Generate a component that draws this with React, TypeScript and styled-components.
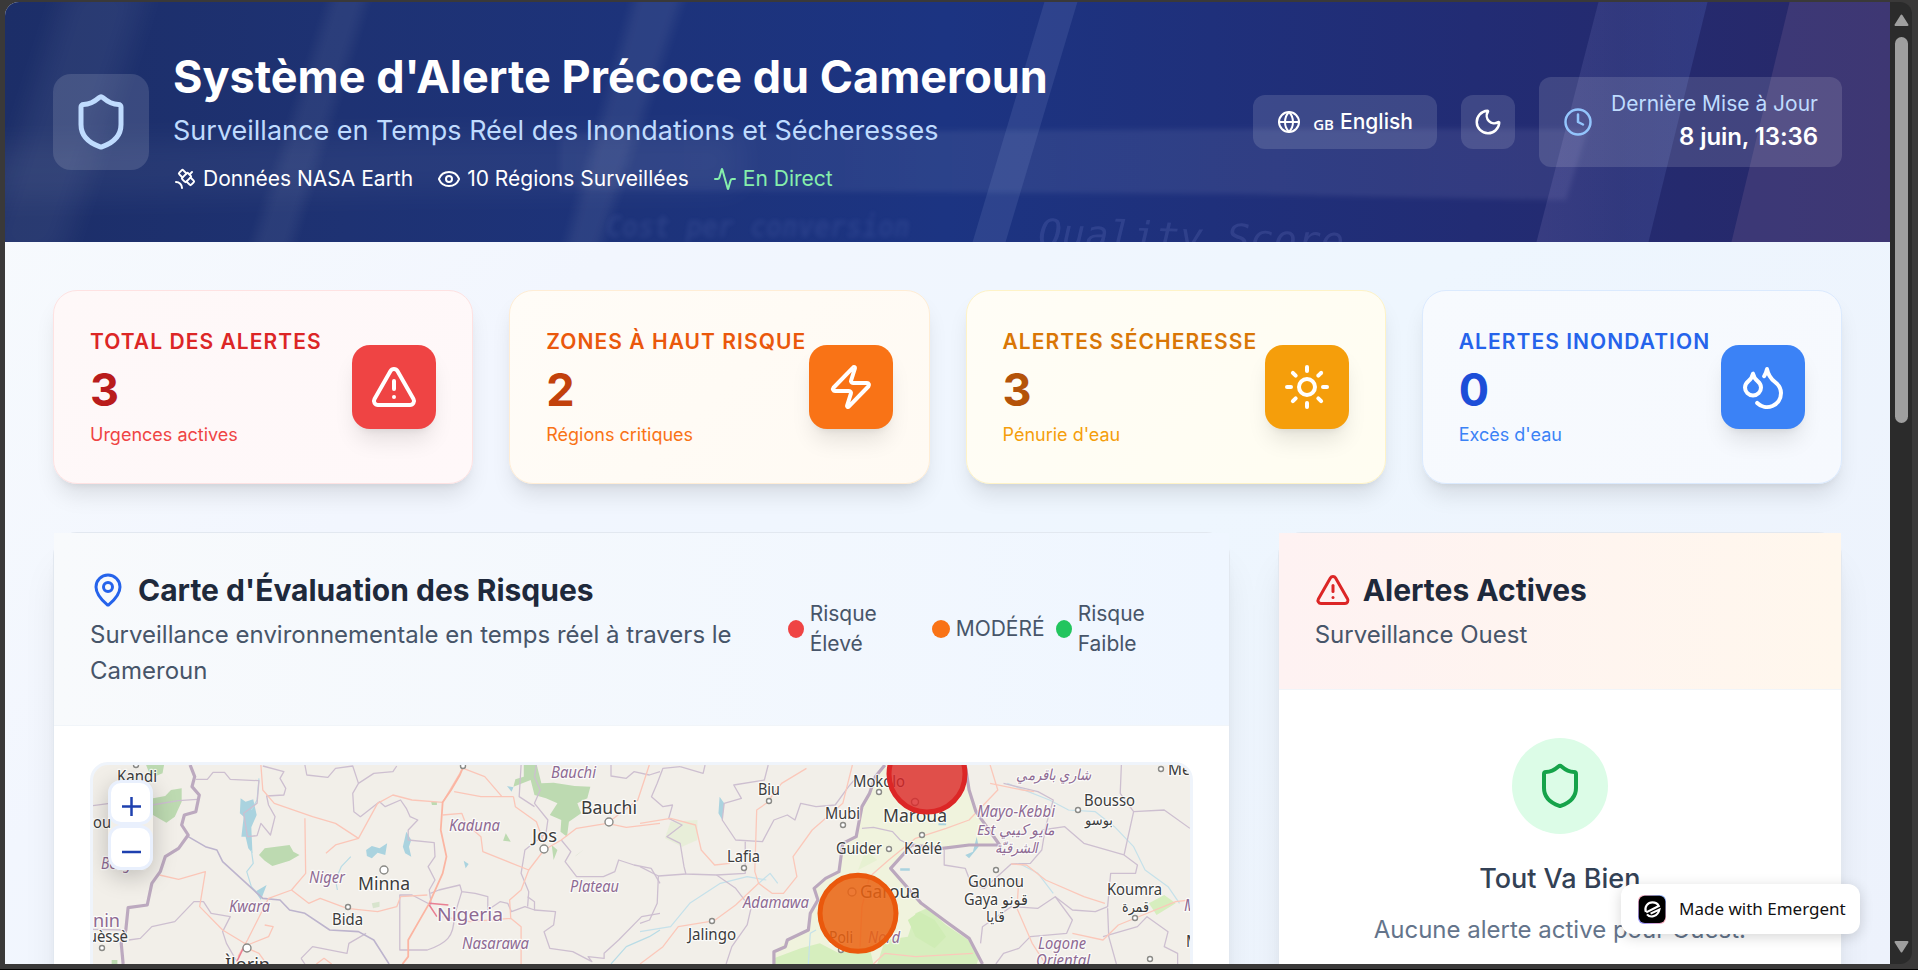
import React from "react";
import styled, { createGlobalStyle } from "styled-components";
import {
  Activity,
  Clock,
  Droplets,
  Eye,
  Globe,
  MapPin,
  Moon,
  Satellite,
  Shield,
  Sun,
  TriangleAlert,
  Zap,
} from "lucide-react";

const GlobalStyle = createGlobalStyle`
  *, *::before, *::after { box-sizing: border-box; }
  html, body { margin: 0; padding: 0; background: #000; overflow: hidden; }
  body { font-family: Inter, "Liberation Sans", sans-serif; }
  h1, h2, h3, p { margin: 0; }
`;

const Frame = styled.div`
  height: 969px;
  padding: 2px 6px 5px 5px;
  background: #3a3939;
`;

const Window = styled.div`
  position: relative;
  display: flex;
  height: 962px;
  border-radius: 14px 12px 12px 0;
  overflow: hidden;
`;

const Page = styled.div`
  width: 1885px;
  height: 962px;
  flex: none;
  overflow: hidden;
  background: linear-gradient(135deg, #f8fbfd 0%, #f2f6fe 30%, #eef6fe 60%, #edf2fc 100%);
`;

const Scrollbar = styled.div`
  display: flex;
  flex: 1;
  flex-direction: column;
  align-items: center;
  padding: 12px 4px 11px 4px;
  background: #2b2b2b;
`;

const Arrow = styled.svg`
  width: 15px;
  height: 12px;
  flex: none;
  fill: #9f9f9f;
  stroke: #9f9f9f;
  stroke-width: 2;
  stroke-linejoin: round;
`;

const Thumb = styled.div`
  width: 13px;
  height: 386px;
  margin: 11px 0 auto;
  border-radius: 7px;
  background: #9f9f9f;
`;

const Header = styled.header`
  position: relative;
  height: 240px;
  padding: 48px;
  overflow: hidden;
  background: linear-gradient(90deg, #1c2e68 0%, #1e3273 18%, #1c3482 50%, #222c74 78%, #282868 100%);
`;

const Backdrop = styled.svg`
  position: absolute;
  inset: 0;
  width: 100%;
  height: 100%;
`;

const HeaderRow = styled.div`
  position: relative;
  display: flex;
  align-items: center;
  justify-content: space-between;
  height: 144px;
`;

const Brand = styled.div`
  display: flex;
  align-items: center;
  gap: 24px;
`;

const glass = "rgba(255, 255, 255, 0.13)";

const BrandIcon = styled.div`
  display: grid;
  place-items: center;
  width: 96px;
  height: 96px;
  border-radius: 18px;
  background: ${glass};
  color: #bfdbfe;
`;

const Title = styled.h1`
  font-size: 45px;
  line-height: 54px;
  font-weight: 700;
  color: #fff;
  white-space: nowrap;
`;

const Subtitle = styled.p`
  margin-top: 6px;
  font-size: 27px;
  line-height: 42px;
  color: #bfdbfe;
`;

const Facts = styled.div`
  display: flex;
  gap: 24px;
  margin-top: 12px;
`;

const Fact = styled.div<{ $color?: string }>`
  display: flex;
  align-items: center;
  gap: 6px;
  font-size: 21px;
  line-height: 30px;
  color: ${(p) => p.$color ?? "#fff"};
`;

const Actions = styled.div`
  display: flex;
  align-items: center;
  gap: 24px;
  color: #fff;
`;

const LanguageButton = styled.button`
  display: flex;
  align-items: center;
  width: 184px;
  height: 54px;
  padding: 0 24px;
  border: 0;
  border-radius: 12px;
  background: ${glass};
  color: #fff;
  font: 500 21px/30px Inter, sans-serif;
  white-space: nowrap;
`;

const Flag = styled.span`
  width: 21px;
  margin: 3px 6px 0 12px;
  font: 600 15px/24px "Open Sans", sans-serif;
`;

const ThemeButton = styled.button`
  display: grid;
  place-items: center;
  width: 54px;
  height: 54px;
  padding: 0;
  border: 0;
  border-radius: 12px;
  background: ${glass};
  color: #fff;
`;

const Updated = styled.div`
  display: flex;
  align-items: center;
  gap: 18px;
  height: 90px;
  padding: 12px 24px;
  border-radius: 12px;
  background: ${glass};
  text-align: right;
`;

const UpdatedLabel = styled.p`
  font-size: 21px;
  line-height: 30px;
  color: #bfdbfe;
`;

const UpdatedValue = styled.p`
  font-size: 24px;
  line-height: 36px;
  font-weight: 600;
  letter-spacing: -0.1px;
`;

const Main = styled.main`
  padding: 48px;
`;

const Stats = styled.section`
  display: grid;
  grid-template-columns: repeat(4, 1fr);
  gap: 36px;
`;

const StatCard = styled.article<{ $bg: string; $border: string }>`
  display: flex;
  align-items: center;
  justify-content: space-between;
  height: 194px;
  padding: 36px;
  border: 1px solid ${(p) => p.$border};
  border-radius: 24px;
  background: ${(p) => p.$bg};
  box-shadow: 0 15px 22px -4px rgba(0, 0, 0, 0.1), 0 6px 9px -6px rgba(0, 0, 0, 0.1);
`;

const StatText = styled.div`
  width: 0;
  white-space: nowrap;
`;

const StatLabel = styled.p<{ $color: string }>`
  font-size: 21px;
  line-height: 30px;
  font-weight: 600;
  letter-spacing: 1.05px;
  text-transform: uppercase;
  color: ${(p) => p.$color};
`;

const StatValue = styled.p<{ $color: string }>`
  margin-top: 6px;
  font-size: 45px;
  line-height: 54px;
  font-weight: 700;
  color: ${(p) => p.$color};
`;

const StatNote = styled.p<{ $color: string }>`
  margin-top: 6px;
  font-size: 18px;
  line-height: 24px;
  color: ${(p) => p.$color};
`;

const StatIcon = styled.div<{ $bg: string }>`
  display: grid;
  place-items: center;
  width: 84px;
  height: 84px;
  border-radius: 18px;
  background: ${(p) => p.$bg};
  color: #fff;
  box-shadow: 0 15px 22px -4px rgba(0, 0, 0, 0.1), 0 6px 9px -6px rgba(0, 0, 0, 0.1);
`;

const Panels = styled.section`
  display: grid;
  grid-template-columns: repeat(3, 1fr);
  gap: 48px;
  margin-top: 48px;
`;

const Panel = styled.article<{ $span?: number }>`
  grid-column: span ${(p) => p.$span ?? 1};
  height: 1000px;
  border: 1px solid #e2e8f0;
  border-radius: 24px;
  background: #fff;
  box-shadow: 0 30px 38px -8px rgba(0, 0, 0, 0.1), 0 12px 15px -9px rgba(0, 0, 0, 0.1);
`;

const PanelHeader = styled.div<{ $bg: string }>`
  display: flex;
  align-items: center;
  justify-content: space-between;
  padding: 36px;
  border-bottom: 1px solid #f1f5f9;
  background: ${(p) => p.$bg};
`;

const PanelTitle = styled.h2`
  display: flex;
  align-items: center;
  gap: 12px;
  font-size: 30px;
  line-height: 42px;
  font-weight: 700;
  color: #1e293b;
`;

const PanelNote = styled.p`
  margin-top: 6px;
  font-size: 24px;
  line-height: 36px;
  color: #475569;
`;

const PanelHeading = styled.div`
  flex: none;
  width: 662px;
`;

const Legend = styled.div`
  display: grid;
  grid-template-columns: 132px 112px 137px;
  gap: 12px;
`;

const LegendItem = styled.div`
  display: flex;
  align-items: center;
  gap: 6px;
  font-size: 21px;
  line-height: 30px;
  color: #475569;
`;

const LegendText = styled.span<{ $wrap?: boolean }>`
  width: ${(p) => (p.$wrap ? "80px" : "auto")};
`;

const Dot = styled.span<{ $color: string; $narrow?: boolean }>`
  flex: none;
  width: ${(p) => (p.$narrow ? 16 : 18)}px;
  height: 18px;
  border-radius: 50%;
  background: ${(p) => p.$color};
`;

const MapBody = styled.div`
  padding: 36px;
`;

const MapFrame = styled.div`
  position: relative;
  height: 600px;
  border: 3px solid #eff4fb;
  border-radius: 18px;
  overflow: hidden;
  background: #f2efe9;
`;

const MapCanvas = styled.svg`
  display: block;
  width: 100%;
  height: 199px;
`;

const ZoomControl = styled.div`
  position: absolute;
  top: 15px;
  left: 15px;
  width: 45px;
  border-radius: 14px;
  box-shadow: 0 6px 24px rgba(0, 0, 0, 0.22);
`;

const ZoomButton = styled.button`
  display: grid;
  place-items: center;
  width: 45px;
  height: 45px;
  padding: 7px 0 0 1px;
  border: 3px solid #e9f0fd;
  border-radius: 13px;
  background: #fff;
`;

const ZoomGlyph = styled.svg`
  width: 19px;
  height: 19px;
  stroke: #1e40af;
  stroke-width: 2.5;
`;

const Empty = styled.div`
  display: flex;
  flex-direction: column;
  align-items: center;
  padding: 48px 36px;
`;

const EmptyIcon = styled.div`
  display: grid;
  place-items: center;
  width: 96px;
  height: 96px;
  border-radius: 50%;
  background: #dcfce7;
  color: #16a34a;
`;

const EmptyTitle = styled.h3`
  margin-top: 24px;
  font-size: 27px;
  line-height: 42px;
  font-weight: 500;
  color: #334155;
`;

const EmptyText = styled.p`
  margin-top: 12px;
  font-size: 24px;
  line-height: 36px;
  color: #64748b;
`;

const Badge = styled.div`
  position: absolute;
  right: 52px;
  bottom: 30px;
  display: flex;
  align-items: center;
  gap: 13px;
  width: 239px;
  height: 50px;
  padding: 0 0 0 17px;
  border-radius: 12px;
  background: #fff;
  box-shadow: 0 3px 14px rgba(0, 0, 0, 0.16);
  color: #111;
  font: 400 17px/24px "Noto Sans", "Open Sans", sans-serif;
  white-space: nowrap;
`;

const Logo = styled.svg`
  flex: none;
  width: 28px;
  height: 29px;
`;

const stats = [
  { label: "Total des alertes", value: 3, note: "Urgences actives", Icon: TriangleAlert, bg: "linear-gradient(135deg,#fef8f8,#fff8f9)", border: "#fee2e2", tones: ["#dc2626", "#b91c1c", "#ef4444"], fill: "#ef4444" },
  { label: "Zones à haut risque", value: 2, note: "Régions critiques", Icon: Zap, bg: "linear-gradient(135deg,#fffcf7,#fffaf3)", border: "#ffedd5", tones: ["#ea580c", "#c2410c", "#f97316"], fill: "#f97316" },
  { label: "Alertes sécheresse", value: 3, note: "Pénurie d'eau", Icon: Sun, bg: "linear-gradient(135deg,#fffdf6,#fffdf1)", border: "#fef3c7", tones: ["#d97706", "#b45309", "#f59e0b"], fill: "#f59e0b" },
  { label: "Alertes inondation", value: 0, note: "Excès d'eau", Icon: Droplets, bg: "linear-gradient(135deg,#f7fafe,#f6f9fe)", border: "#dbeafe", tones: ["#2563eb", "#1d4ed8", "#3b82f6"], fill: "#3b82f6" },
];

function HeaderBackdrop() {
  return (
    <Backdrop viewBox="5 2 1885 240" preserveAspectRatio="none">
      <defs>
        <filter id="soft" x="-20%" width="140%"><feGaussianBlur stdDeviation="2.5" /></filter>
        <filter id="softer" x="-60%" width="220%" y="-60%" height="220%"><feGaussianBlur stdDeviation="14" /></filter>
        <filter id="medium" x="-60%" width="220%"><feGaussianBlur stdDeviation="6" /></filter>
        <linearGradient id="band" x1="0" x2="1" y1="0" y2="0">
          <stop offset="0" stopColor="#fff" stopOpacity="0.04" />
          <stop offset="0.4" stopColor="#fff" stopOpacity="0.07" />
          <stop offset="1" stopColor="#d8d4ff" stopOpacity="0.09" />
        </linearGradient>
        <linearGradient id="column" x1="0" x2="1" y1="0" y2="0">
          <stop offset="0" stopColor="#e0c8ff" stopOpacity="0.11" />
          <stop offset="0.5" stopColor="#a8b8ff" stopOpacity="0.1" />
          <stop offset="1" stopColor="#78a0ff" stopOpacity="0.14" />
        </linearGradient>
      </defs>
      <path d="M70 -20H150L60 262H-20Z" fill="#fff" opacity="0.06" filter="url(#softer)" />
      <path d="M337 -20H372L286 262H248Z" fill="#fff" opacity="0.06" filter="url(#medium)" />
      <path d="M640 -20H688L594 262H562Z" fill="#fff" opacity="0.07" filter="url(#medium)" />
      <path d="M-40 145L420 135L740 132V190L420 192L-40 200Z" fill="#fff" opacity="0.045" filter="url(#softer)" />
      <path d="M560 133L1250 129L1588 129L1566 200L1240 194L560 190Z" fill="url(#band)" filter="url(#soft)" />
      <path d="M1045 0H1078L1005 244H972Z" fill="#c8d4ff" opacity="0.1" />
      <path d="M1599 0H1708L1648 244H1536Z" fill="url(#column)" />
      <path d="M1790 0H1892V244H1731Z" fill="#e0a8c8" opacity="0.12" />
      <g fill="#a9b6ff" fontFamily="DejaVu Sans Mono, Liberation Mono, monospace" fontStyle="italic">
        <text x="1038" y="246" fontSize="38" textLength="306" lengthAdjust="spacingAndGlyphs" opacity="0.12" transform="rotate(1.5 1038 246)">Quality Score</text>
        <text x="606" y="237" fontSize="30" fontWeight="700" textLength="304" lengthAdjust="spacingAndGlyphs" opacity="0.09" filter="url(#soft)">Cost per conversion</text>
      </g>
    </Backdrop>
  );
}

type Kind = "city" | "region" | "country";
type Label = [text: string, x: number, y: number, width: number, size: number, kind: Kind];

const labels: Label[] = [
  ["Kandi", 117, 782, 40, 15.5, "city"],
  ["Parakou", 54, 828, 57, 15.5, "city"],
  ["Borgou", 101, 869, 46, 15.5, "region"],
  ["Bénin", 71, 927, 49, 18, "country"],
  ["Bouèssè", 69, 942, 59, 15.5, "city"],
  ["Ìlorin", 225, 971, 45, 18, "city"],
  ["Niger", 309, 883, 36, 15.5, "region"],
  ["Kwara", 229, 912, 41, 15.5, "region"],
  ["Minna", 358, 890, 52, 18, "city"],
  ["Bida", 332, 925, 31, 15.5, "city"],
  ["Nigeria", 437, 921, 66, 18, "country"],
  ["Nasarawa", 462, 949, 67, 15.5, "region"],
  ["Kaduna", 449, 831, 51, 15.5, "region"],
  ["Bauchi", 551, 778, 45, 15.5, "region"],
  ["Bauchi", 581, 814, 56, 18, "city"],
  ["Jos", 532, 842, 25, 18, "city"],
  ["Plateau", 570, 892, 49, 15.5, "region"],
  ["Biu", 758, 795, 22, 15.5, "city"],
  ["Lafia", 727, 862, 33, 15.5, "city"],
  ["Mubi", 825, 819, 35, 15.5, "city"],
  ["Mokolo", 853, 787, 52, 15.5, "city"],
  ["Maroua", 883, 822, 64, 18, "city"],
  ["Guider", 836, 854, 46, 15.5, "city"],
  ["Kaélé", 904, 854, 38, 15.5, "city"],
  ["Garoua", 860, 898, 60, 18, "city"],
  ["Poli", 829, 943, 24, 15.5, "city"],
  ["Nord", 868, 943, 32, 15.5, "region"],
  ["Adamawa", 743, 908, 66, 15.5, "region"],
  ["Jalingo", 688, 940, 48, 15.5, "city"],
  ["شاري باقرمي", 1016, 780, 76, 15, "region"],
  ["Mayo-Kebbi", 977, 817, 78, 15.5, "region"],
  ["Est مايو كيبي", 977, 835, 78, 15, "region"],
  ["الشرقيّة", 995, 853, 43, 14.5, "region"],
  ["Bousso", 1084, 806, 51, 15.5, "city"],
  ["بوسو", 1085, 825, 28, 15, "city"],
  ["Gounou", 968, 887, 56, 15.5, "city"],
  ["Gaya قونو", 964, 905, 64, 15.5, "city"],
  ["قايا", 986, 922, 19, 15, "city"],
  ["Koumra", 1107, 895, 55, 15.5, "city"],
  ["قمرة", 1122, 912, 27, 15, "city"],
  ["Melfi", 1168, 775, 36, 15.5, "city"],
  ["Logone", 1038, 949, 48, 15.5, "region"],
  ["Oriental", 1036, 966, 54, 15.5, "region"],
  ["Mandoul", 1184, 911, 60, 15.5, "region"],
  ["Moïssala", 1186, 947, 60, 15.5, "city"],
];

const towns: [number, number, number][] = [
  [136, 765, 2.5], [102, 948, 2.5], [247, 948, 4], [348, 907, 2.5], [384, 870, 4], [463, 766, 2.5],
  [609, 822, 4], [544, 849, 4], [769, 801, 2.5], [744, 868, 2.5], [843, 825, 2.5], [879, 792, 2.5],
  [915, 802, 3.5], [922, 835, 2.5], [889, 849, 2.5], [852, 892, 4], [841, 950, 2.5], [712, 921, 2.5],
  [1161, 769, 2.5], [1078, 810, 2.5], [996, 870, 2.5], [1135, 918, 2.5], [1150, 959, 2.5],
];

const West = "translate(60 740) scale(0.38265 0.33333)";
const East = "translate(640 740) scale(0.38265 0.33333)";

function RiskMap() {
  const line = { fill: "none", vectorEffect: "non-scaling-stroke" as const, strokeLinejoin: "round" as const };
  return (
    <MapCanvas viewBox="93 765 1097 199" preserveAspectRatio="xMinYMin slice">
      <g transform={West}>
        <g fill="#bddab1">
          <path d="M225 75H272L268 100L250 108L232 95Z" />
          <path d="M243 175L275 168L290 150L318 145V185L300 230L278 248L243 225Z" />
          <path d="M520 345L535 325L600 315L610 335L626 345L600 362L555 378L535 362Z" />
          <path d="M1212 75H1246L1258 130L1290 128L1345 138L1386 140L1378 175L1352 190L1362 220L1330 245L1325 290L1308 275L1310 240L1280 225L1300 190L1270 175L1240 165L1230 120L1185 140L1190 118L1212 110Z" />
          <path d="M1165 280L1178 305L1158 302ZM1285 315L1300 330L1290 360ZM1345 350L1370 328L1350 345ZM970 185H985V195H972ZM135 660H150V672H135Z" />
          <path d="M815 490L835 485V500L818 505Z" opacity=".5" />
        </g>
        <g fill="#aad3df">
          <path d="M472 175L485 185L505 178L514 225L500 262L503 340L492 325L485 290L474 290L480 230L470 220Z" />
          <path d="M800 330L815 318L835 325L855 310L850 345L830 338L815 355L802 348Z" />
          <path d="M905 275L918 300L912 320L918 350L902 340L896 320Z" />
          <path d="M1055 362L1068 372L1060 385ZM510 455L540 435L525 480ZM1168 138L1185 142L1180 155Z" />
        </g>
        <g stroke="#b8dce6" strokeWidth="1.2">
          <path {...line} d="M520 115L515 180L500 210M500 330L505 370L488 395L500 440L525 470M725 450L720 420L735 380L760 350M1440 672L1480 620L1540 590L1568 570" />
        </g>
        <g stroke="#cdbfd0" strokeWidth="1.3">
          <path {...line} d="M85 197L130 190M240 195L310 182L358 178" />
          <path {...line} d="M355 118L385 118L400 97L430 97L445 118L520 122L515 190L480 220L490 290L515 287L525 250L550 285L562 230L545 195L540 168L585 165L590 145L575 115L585 95L530 78" />
          <path {...line} d="M640 75L645 105L700 112L720 85L765 78L780 130L765 160L768 215L785 230L835 185L850 200L890 180L905 205L915 230L935 240L910 270L910 300L978 308L980 350L962 380L980 420L965 450L970 490M780 130L820 100L870 95L880 78" />
          <path {...line} d="M180 600L210 595L240 560L300 545L350 485L375 485L395 520L445 530L425 575L435 610L460 660M85 568L165 570" />
          <path {...line} d="M970 495L920 465H888V630H960C1010 610 1030 590 1030 530L1050 455L1085 460L1118 470V510L1150 485L1170 490L1180 515L1215 500L1240 510V485L1222 470M1050 455L1045 435L990 450L968 460" />
          <path {...line} d="M1245 75L1240 110L1255 150L1240 190L1275 240L1270 280L1215 330L1205 400L1225 455L1222 500M1205 75L1200 170L1240 200" />
          <path {...line} d="M1310 300L1335 335L1320 365L1350 410L1420 410L1450 395L1460 360L1500 375L1545 385L1568 430M1240 510L1295 515L1290 555L1265 575L1280 625L1340 635L1390 665L1380 650L1422 655V640L1460 600L1520 530L1568 520" />
          <path {...line} d="M1440 75V108L1480 115L1500 95L1540 105L1568 95M630 655L660 620L750 640L755 610L800 580M640 672L630 655" />
        </g>
        <path {...line} stroke="#bdb4cd" strokeWidth="1.6" d="M335 290L380 320L410 330L425 365L530 475L575 480L600 510L640 520L705 570L780 575L820 600L860 672" />
        <g stroke="#fbc6b8" strokeWidth="1.3">
          <path {...line} d="M525 75L530 150L560 190L660 230L720 250L780 295L830 190L870 165L920 180L1000 187L1045 100L1054 80M780 295L720 315L695 340M640 235L642 400L605 450L545 475L490 600L465 650" />
          <path {...line} d="M605 450L650 490L680 475L750 505L830 515L880 500L890 470L960 465M1030 155L1100 170L1185 170M1054 85L1110 110L1155 170M1000 225L1050 220L1060 250L1100 290L1105 335L1225 390L1265 330L1310 300L1350 265L1430 250L1480 262L1568 250" />
          <path {...line} d="M1185 170L1190 200L1245 245L1265 310M1225 390L1205 450L1175 480L1178 535L1205 560V672M1178 535L1070 545L1000 530M260 405L310 418L380 395L365 500L425 570L490 615M535 555L557 560L545 590L490 615M1430 250L1510 180L1540 75" />
          <path {...line} d="M490 625L520 640L540 672M670 672L690 655L710 672" />
        </g>
        <path {...line} stroke="#fbb5a2" strokeWidth="1.8" d="M1054 80L1045 105L1022 150L1000 187L995 270L1010 350L1000 400L965 490L930 560L910 600V650L895 672" />
        <path {...line} stroke="#e97f92" strokeWidth="1.5" d="M965 490L1015 495M965 495L985 530M480 622L462 665" />
        <path {...line} stroke="#bca9bf" strokeWidth="3.2" d="M340 75L352 110L345 140L364 165L355 215L325 225L318 255L335 285L310 325L275 350L262 395L240 430L228 495L178 503L172 570L160 610L165 672" />
      </g>
      <g transform={East}>
        <path fill="#f0f3dd" d="M640 75L615 110L600 160L580 200L565 290L530 310L520 395L485 415L455 445L465 480L445 520L440 570L385 600L350 635V672H890L860 600L735 490L660 385L710 315L790 325L930 318L875 215L850 75Z" />
        <g fill="#d6eebe">
          <path d="M350 672V655L420 625L470 610L520 640L600 620L610 672Z" />
          <path d="M620 672L640 600L700 590L720 520L750 505L800 555L858 600L885 655L880 672Z" />
          <path d="M700 540L730 515L770 540L800 590L770 625L720 590Z" fill="#cfecb5" />
          <path d="M1330 490L1370 465L1400 490L1350 525Z" />
          <path d="M80 245L150 240V300L110 320L65 295ZM590 330L620 360L570 390Z" opacity=".35" />
        </g>
        <g fill="none" stroke="#c5e1ea" strokeWidth="1.2">
          <path {...line} d="M0 575L80 560L130 490L210 430L280 410L330 420M310 430L340 400L360 430M960 130L1070 180L1120 210L1190 215L1240 260L1290 320L1320 390L1380 440L1410 490M990 370L1040 400L1080 460M440 672L445 580L460 570" />
        </g>
        <path fill="#aad3df" d="M208 170L220 190L215 240L205 220ZM880 290L885 320L860 355L850 345L870 335ZM680 385H705V392H680ZM780 250H800V256H780Z" />
        <g stroke="#cdbfd0" strokeWidth="1.3">
          <path {...line} d="M105 80L60 85L45 130L30 170L60 200L85 195L75 235L110 255L70 290L105 310L115 380L120 402L200 405L250 445L290 505L280 555L240 620L225 672M0 380L48 408L45 490L25 540L0 550" />
          <path {...line} d="M105 80L165 100L170 75M335 75L325 120L245 135L265 175L220 190L215 240L250 300L320 305L350 240L385 225L405 240L420 190L460 200L510 195L545 140L560 120M275 305V400L200 405M120 402L48 408" />
          <path {...line} d="M580 265L610 262L660 275L680 300L710 318M950 130L1040 155L1080 180L1060 260L1050 330L1020 370L970 372M1258 75L1255 160L1290 215L1265 345M1290 215L1370 210L1437 265M1050 270L1110 260L1160 310L1265 345L1300 375L1295 400L1230 400L1222 500L1190 515L1130 510L1085 470L1040 505L970 500L895 560L890 610" />
          <path {...line} d="M795 330V375L850 385L865 430L900 445L970 372M1085 470L1130 540L1115 580L1020 590L990 625L950 640L930 672M1222 505L1225 590L1245 672M1210 590L1300 560L1325 530L1380 575L1370 620L1405 640V672" />
        </g>
        <g stroke="#fbc8ba" strokeWidth="1.3">
          <path {...line} d="M435 85L370 130L330 190L305 210L300 395L310 430L250 495L190 545M0 250L80 235L145 255L160 330L195 375L235 370M310 430L345 460L375 460L410 410L400 350L450 270L530 190L555 75" />
          <path {...line} d="M915 75L935 150L860 240L800 265L720 295L650 360L600 410L580 500L575 620M915 130L1000 150L1030 155M970 372L1010 375L1060 420L1160 470L1215 490M990 420L985 505L1025 610L1060 672M1130 580L1210 600L1250 555L1400 485L1437 480M0 672L60 620L100 560L180 545M610 672L640 640L720 650L870 640" />
        </g>
        <g stroke="#bba8be" strokeWidth="3.2">
          <path {...line} d="M640 75L615 110L600 160L580 200L565 290L530 310L520 395L485 415L455 445L465 480L445 520L440 570L385 600L380 620L350 635V672" />
          <path {...line} d="M850 75L860 150L878 215L940 315L860 315L790 325L710 315L655 385L735 490L800 545L860 595L895 672" />
        </g>
      </g>
      <g fill="#fff" stroke="#8a8a86" strokeWidth="1.4">
        {towns.map(([x, y, r]) => (
          <circle key={`${x}-${y}`} cx={x} cy={y} r={r} />
        ))}
      </g>
      <g fontFamily="Noto Sans, DejaVu Sans, sans-serif" stroke="#fff" strokeOpacity="0.75" strokeWidth="2.4" strokeLinejoin="round" paintOrder="stroke">
        {labels.map(([text, x, y, width, size, kind]) => (
          <text
            key={`${text}-${x}-${y}`}
            x={x}
            y={y}
            fontSize={size}
            textLength={width}
            lengthAdjust="spacingAndGlyphs"
            fontStyle={kind === "region" ? "italic" : "normal"}
            fill={kind === "city" ? "#3c3c3c" : "#8e6a93"}
          >
            {text}
          </text>
        ))}
      </g>
      <circle cx="927" cy="774" r="38" fill="#dc2626" fillOpacity="0.8" stroke="#dc2626" strokeWidth="5" />
      <circle cx="858" cy="913.3" r="38" fill="#ea6110" fillOpacity="0.85" stroke="#ea580c" strokeWidth="5" />
    </MapCanvas>
  );
}

function EmergentLogo() {
  return (
    <Logo viewBox="0 0 28 29">
      <defs>
        <linearGradient id="edge" x1="0" y1="1" x2="1" y2="0">
          <stop offset="0" stopColor="#4d5dff" />
          <stop offset="0.5" stopColor="#ff8fa0" />
          <stop offset="1" stopColor="#3f8cff" />
        </linearGradient>
      </defs>
      <rect width="28" height="29" rx="6" fill="url(#edge)" opacity="0.7" />
      <rect x="0.8" y="0.8" width="26.6" height="27.2" rx="6" fill="#000" />
      <path d="M7.8 17C6 11.6 10 7.4 14.4 7.4C17.6 7.4 19.8 9 20.8 11L8.2 17.4M9 19.4C12.4 23.4 20 21.4 21.4 14.6L12.6 18.6" fill="none" stroke="#fff" strokeWidth="2.1" />
    </Logo>
  );
}

export default function App() {
  return (
    <>
      <GlobalStyle />
      <Frame>
        <Window>
          <Page>
            <Header>
              <HeaderBackdrop />
              <HeaderRow>
                <Brand>
                  <BrandIcon><Shield size={60} /></BrandIcon>
                  <div>
                    <Title>Système d'Alerte Précoce du Cameroun</Title>
                    <Subtitle>Surveillance en Temps Réel des Inondations et Sécheresses</Subtitle>
                    <Facts>
                      <Fact><Satellite size={24} />Données NASA Earth</Fact>
                      <Fact><Eye size={24} />10 Régions Surveillées</Fact>
                      <Fact $color="#86efac"><Activity size={24} />En Direct</Fact>
                    </Facts>
                  </div>
                </Brand>
                <Actions>
                  <LanguageButton><Globe size={24} /><Flag>GB</Flag>English</LanguageButton>
                  <ThemeButton><Moon size={30} /></ThemeButton>
                  <Updated>
                    <Clock size={30} color="#93c5fd" />
                    <div>
                      <UpdatedLabel>Dernière Mise à Jour</UpdatedLabel>
                      <UpdatedValue>8 juin, 13:36</UpdatedValue>
                    </div>
                  </Updated>
                </Actions>
              </HeaderRow>
            </Header>
            <Main>
              <Stats>
                {stats.map(({ label, value, note, Icon, bg, border, tones, fill }) => (
                  <StatCard key={label} $bg={bg} $border={border}>
                    <StatText>
                      <StatLabel $color={tones[0]}>{label}</StatLabel>
                      <StatValue $color={tones[1]}>{value}</StatValue>
                      <StatNote $color={tones[2]}>{note}</StatNote>
                    </StatText>
                    <StatIcon $bg={fill}><Icon size={48} /></StatIcon>
                  </StatCard>
                ))}
              </Stats>
              <Panels>
                <Panel $span={2}>
                  <PanelHeader $bg="linear-gradient(90deg, #f8fafc, #eff6ff)">
                    <PanelHeading>
                      <PanelTitle><MapPin size={36} color="#2563eb" />Carte d'Évaluation des Risques</PanelTitle>
                      <PanelNote>Surveillance environnementale en temps réel à travers le Cameroun</PanelNote>
                    </PanelHeading>
                    <Legend>
                      <LegendItem><Dot $color="#ef4444" $narrow /><LegendText $wrap>Risque Élevé</LegendText></LegendItem>
                      <LegendItem><Dot $color="#f97316" /><LegendText>MODÉRÉ</LegendText></LegendItem>
                      <LegendItem><Dot $color="#22c55e" $narrow /><LegendText $wrap>Risque Faible</LegendText></LegendItem>
                    </Legend>
                  </PanelHeader>
                  <MapBody>
                    <MapFrame>
                      <RiskMap />
                      <ZoomControl>
                        <ZoomButton aria-label="Zoom avant">
                          <ZoomGlyph viewBox="0 0 19 19"><path d="M0 9.5H19M9.5 0V19" /></ZoomGlyph>
                        </ZoomButton>
                        <ZoomButton aria-label="Zoom arrière">
                          <ZoomGlyph viewBox="0 0 19 19"><path d="M0 10H19" /></ZoomGlyph>
                        </ZoomButton>
                      </ZoomControl>
                    </MapFrame>
                  </MapBody>
                </Panel>
                <Panel>
                  <PanelHeader $bg="linear-gradient(90deg, #fef2f2, #fff7ed)">
                    <div>
                      <PanelTitle><TriangleAlert size={36} color="#dc2626" />Alertes Actives</PanelTitle>
                      <PanelNote>Surveillance Ouest</PanelNote>
                    </div>
                  </PanelHeader>
                  <Empty>
                    <EmptyIcon><Shield size={48} /></EmptyIcon>
                    <EmptyTitle>Tout Va Bien</EmptyTitle>
                    <EmptyText>Aucune alerte active pour Ouest.</EmptyText>
                  </Empty>
                </Panel>
              </Panels>
            </Main>
          </Page>
          <Scrollbar>
            <Arrow viewBox="0 0 15 12"><path d="M7.5 1.5L13.5 11H1.5Z" /></Arrow>
            <Thumb />
            <Arrow viewBox="0 0 15 12"><path d="M7.5 10.5L13.5 1H1.5Z" /></Arrow>
          </Scrollbar>
          <Badge><EmergentLogo />Made with Emergent</Badge>
        </Window>
      </Frame>
    </>
  );
}
